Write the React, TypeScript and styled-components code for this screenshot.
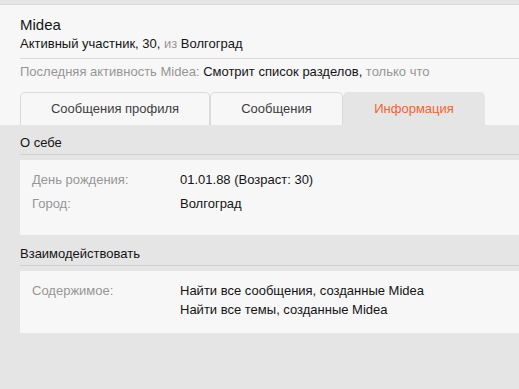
import styled, { createGlobalStyle } from 'styled-components';

const GlobalStyle = createGlobalStyle`
  html, body {
    margin: 0;
    padding: 0;
    background: #e5e5e5;
  }
  body {
    font-family: "Liberation Sans", Arial, sans-serif;
    font-size: 13px;
    color: #141414;
  }
`;

const Page = styled.div`
  padding-top: 4px;
  min-height: 385px;
`;

const Header = styled.div`
  background: #f7f7f7;
  border-top: 1px solid #dadada;
  padding: 10px 0 0 20px;
`;

const Name = styled.h1`
  margin: 0;
  font-size: 15px;
  font-weight: normal;
  line-height: 20px;
  color: #141414;
`;

const UserBlurb = styled.div`
  font-size: 13px;
  line-height: 17px;
  padding-bottom: 6px;
  border-bottom: 1px solid #dadada;
`;

const Muted = styled.span`
  color: #969696;
`;

const Activity = styled.div`
  padding: 4px 0 0;
  line-height: 17px;
  color: #141414;
`;

const Tabs = styled.div`
  display: flex;
  margin-top: 12px;
`;

const Tab = styled.div<{ $active?: boolean; $width: number }>`
  width: ${(p) => p.$width}px;
  box-sizing: border-box;
  height: 33px;
  display: flex;
  align-items: center;
  justify-content: center;
  border: 1px solid ${(p) => (p.$active ? '#e5e5e5' : '#dadada')};
  border-bottom: none;
  border-radius: 5px 5px 0 0;
  background: ${(p) => (p.$active ? '#e5e5e5' : '#f7f7f7')};
  color: ${(p) => (p.$active ? '#f5632d' : '#3e3e3e')};
  padding-bottom: 1px;
`;

const Content = styled.div`
  padding: 8px 0 0 20px;
`;

const SectionTitle = styled.h3`
  margin: 0;
  font-size: 13px;
  font-weight: normal;
  line-height: 20px;
  padding-bottom: 1px;
  border-bottom: 1px solid #d0d0d0;
  color: #141414;
`;

const Panel = styled.div<{ $bottom: number }>`
  background: #f7f7f7;
  margin: 5px 0 9px;
  padding: 10px 12px ${(p) => p.$bottom}px;
`;

const Row = styled.div`
  display: flex;
  line-height: 19px;
  margin-bottom: 5px;
`;

const Label = styled.div`
  width: 148px;
  color: #969696;
`;

const Values = styled.div`
  display: flex;
  flex-direction: column;
`;

export default function App() {
  return (
    <>
      <GlobalStyle />
      <Page>
        <Header>
          <Name>Midea</Name>
          <UserBlurb>
            Активный участник, 30, <Muted>из</Muted> Волгоград
          </UserBlurb>
          <Activity>
            <Muted>Последняя активность Midea:</Muted> Смотрит список разделов, <Muted>только что</Muted>
          </Activity>
          <Tabs>
            <Tab $width={190}>Сообщения профиля</Tab>
            <Tab $width={133}>Сообщения</Tab>
            <Tab $width={142} $active>
              Информация
            </Tab>
          </Tabs>
        </Header>
        <Content>
          <SectionTitle>О себе</SectionTitle>
          <Panel $bottom={17}>
            <Row>
              <Label>День рождения:</Label>
              <Values>01.01.88 (Возраст: 30)</Values>
            </Row>
            <Row>
              <Label>Город:</Label>
              <Values>Волгоград</Values>
            </Row>
          </Panel>
          <SectionTitle>Взаимодействовать</SectionTitle>
          <Panel $bottom={9}>
            <Row>
              <Label>Содержимое:</Label>
              <Values>
                <span>Найти все сообщения, созданные Midea</span>
                <span>Найти все темы, созданные Midea</span>
              </Values>
            </Row>
          </Panel>
        </Content>
      </Page>
    </>
  );
}
